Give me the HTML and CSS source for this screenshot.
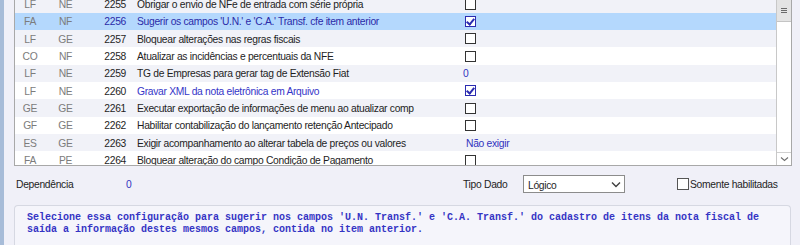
FILE: index.html
```html
<!DOCTYPE html>
<html lang="pt">
<head>
<meta charset="utf-8">
<link rel="stylesheet" href="styles.css">
</head>
<body>
<div class="strip"></div>
<div class="main">
  <div class="grid">
    <div class="rows">
      <div class="row alt"><span class="c1">LF</span><span class="c2">NE</span><span class="c3">2255</span><span class="c4">Obrigar o envio de NFe de entrada com série própria</span><span class="c5"><i class="cb"></i></span></div>
      <div class="row sel"><span class="c1">FA</span><span class="c2">NF</span><span class="c3">2256</span><span class="c4">Sugerir os campos 'U.N.' e 'C.A.' Transf. cfe item anterior</span><span class="c5"><i class="cb on"></i></span></div>
      <div class="row alt"><span class="c1">LF</span><span class="c2">GE</span><span class="c3">2257</span><span class="c4">Bloquear alterações nas regras fiscais</span><span class="c5"><i class="cb"></i></span></div>
      <div class="row"><span class="c1">CO</span><span class="c2">NF</span><span class="c3">2258</span><span class="c4">Atualizar as incidências e percentuais da NFE</span><span class="c5"><i class="cb"></i></span></div>
      <div class="row alt"><span class="c1">LF</span><span class="c2">NE</span><span class="c3">2259</span><span class="c4">TG de Empresas para gerar tag de Extensão Fiat</span><span class="c5"><span class="val">0</span></span></div>
      <div class="row"><span class="c1">LF</span><span class="c2">NE</span><span class="c3">2260</span><span class="c4 blue">Gravar XML da nota eletrônica em Arquivo</span><span class="c5"><i class="cb on"></i></span></div>
      <div class="row alt"><span class="c1">GE</span><span class="c2">GE</span><span class="c3">2261</span><span class="c4">Executar exportação de informações de menu ao atualizar comp</span><span class="c5"><i class="cb"></i></span></div>
      <div class="row"><span class="c1">GF</span><span class="c2">GE</span><span class="c3">2262</span><span class="c4">Habilitar contabilização do lançamento retenção Antecipado</span><span class="c5"><i class="cb"></i></span></div>
      <div class="row alt"><span class="c1">ES</span><span class="c2">GE</span><span class="c3">2263</span><span class="c4">Exigir acompanhamento ao alterar tabela de preços ou valores</span><span class="c5"><span class="val v2">Não exigir</span></span></div>
      <div class="row"><span class="c1">FA</span><span class="c2">PE</span><span class="c3">2264</span><span class="c4">Bloquear alteração do campo Condição de Pagamento</span><span class="c5"><i class="cb"></i></span></div>
    </div>
    <div class="scroll">
      <div class="thumb"><span></span><span></span><span></span></div>
      <div class="track"></div>
      <div class="down"><svg width="9" height="6" viewBox="0 0 9 6"><path d="M1 1.5 L4.5 4.5 L8 1.5" fill="none" stroke="#707070" stroke-width="1.1"/></svg></div>
    </div>
  </div>
  <div class="filters">
    <span class="lbl dep">Dependência</span>
    <span class="depval">0</span>
    <span class="lbl tipo">Tipo Dado</span>
    <div class="select"><span>Lógico</span><svg width="10" height="7" viewBox="0 0 10 7"><path d="M1 1.5 L5 5.5 L9 1.5" fill="none" stroke="#404040" stroke-width="1.4"/></svg></div>
    <label class="chk"><i class="box"></i><span>Somente habilitadas</span></label>
  </div>
  <div class="memo">Selecione essa configuração para sugerir nos campos 'U.N. Transf.' e 'C.A. Transf.' do cadastro de itens da nota fiscal de
saída a informação destes mesmos campos, contida no item anterior.</div>
</div>
</body>
</html>
```
FILE: styles.css
```css
html, body {
  margin: 0;
  padding: 0;
  height: 245px;
  overflow: hidden;
}
body {
  display: flex;
  background: #f0f0f8;
  font-family: "Liberation Sans", Arial, sans-serif;
  font-size: 10.3px;
  letter-spacing: -0.3px;
  color: #1e1e1e;
}
.strip {
  width: 4px;
  flex: none;
  background: #a7bcd8;
}
.main {
  flex: 1;
  min-width: 0;
  padding-left: 10px;
  padding-right: 8px;
  display: flex;
  flex-direction: column;
}
.grid {
  height: 165px;
  flex: none;
  border: 1px solid #a8a8a8;
  border-top: none;
  display: flex;
  background: #fff;
  overflow: hidden;
}
.rows {
  flex: 1;
  margin-top: -4.6px;
}
.row {
  height: 17.33px;
  display: flex;
  align-items: center;
  background: #fff;
  white-space: nowrap;
}
.row.alt { background: #f1f2f8; }
.row.sel { background: #b4d8fd; }
.row.sel .c3, .row.sel .c4 { color: #2a2aa8; }
.row > span { flex: none; padding-top: 1px; }
.c1 { width: 30px; text-align: center; color: #7c7c7c; }
.c2 { width: 41px; text-align: center; color: #7c7c7c; }
.c3 { width: 40px; text-align: right; }
.c4 { width: 327px; padding-left: 11px; overflow: hidden; }
.c4.blue { color: #3535c8; }
.row > .c5 { flex: 1; display: flex; align-items: center; padding-top: 0; }
.cb {
  display: block;
  width: 9px;
  height: 9px;
  border: 1px solid #333;
  background: #fff;
  margin-left: 1px;
  position: relative;
}
.cb.on { border-color: #2b2bb0; }
.cb.on::after {
  content: "";
  position: absolute;
  left: 2px;
  top: 0px;
  width: 3px;
  height: 6px;
  border: solid #2b2bb0;
  border-width: 0 2px 2px 0;
  transform: rotate(40deg);
}
.val { color: #3232c0; margin-left: -1px; padding-top: 1px; }
.val.v2 { margin-left: 2px; }
.scroll {
  width: 14px;
  flex: none;
  border-left: 1px solid #c8c8c8;
  display: flex;
  flex-direction: column;
  background: #fff;
}
.thumb {
  height: 21px;
  background: #e4e4e4;
  border-bottom: 1px solid #c4c4c4;
  display: flex;
  flex-direction: column;
  align-items: center;
  justify-content: center;
  gap: 1px;
}
.thumb span {
  display: block;
  width: 6px;
  height: 1px;
  background: #6a6a6a;
}
.track { flex: 1; }
.down {
  height: 12px;
  border-top: 1px solid #d0d0d0;
  display: flex;
  align-items: center;
  justify-content: center;
}
.filters {
  margin-top: 9px;
  height: 18px;
  flex: none;
  display: flex;
  align-items: center;
  white-space: nowrap;
}
.filters > * { flex: none; }
.lbl { color: #1e1e1e; }
.dep { width: 110px; padding-left: 2px; }
.depval { width: 337px; color: #3232c0; }
.tipo { width: 60px; }
.select {
  width: 93px;
  height: 16px;
  border: 1px solid #8c8c8c;
  background: #fff;
  display: flex;
  align-items: center;
  justify-content: space-between;
  padding: 0 3px 0 4px;
}
.select span { padding-top: 2px; }
.chk {
  margin-left: 52px;
  display: flex;
  align-items: center;
}
.box {
  width: 10px;
  height: 10px;
  border: 1px solid #555;
  background: #fff;
  margin-right: 1px;
}
.memo {
  margin-top: 12px;
  flex: 1;
  margin-right: 1px;
  border: 1px solid #d6d8e2;
  border-bottom: none;
  border-radius: 4px 4px 0 0;
  background: #f5f5fb;
  padding: 6px 12px 5px;
  font-family: "Liberation Mono", monospace;
  font-size: 10px;
  font-weight: bold;
  letter-spacing: 0;
  line-height: 12px;
  color: #3434c4;
  white-space: pre;
}
```
